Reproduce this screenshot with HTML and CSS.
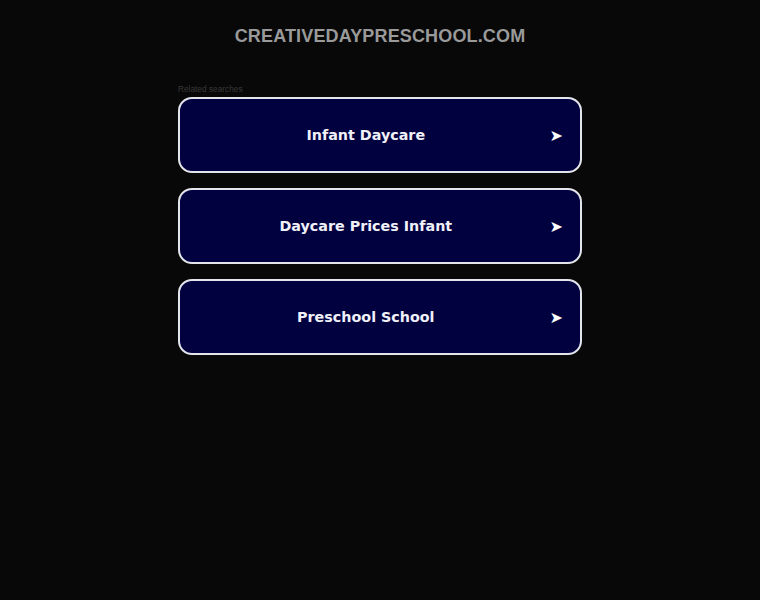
FILE: index.html
```html
<!DOCTYPE html>
<html>
  <head>
    <title>creativedaypreschool.com</title>
    <link rel="stylesheet" href="styles.css">
  </head>
  <body>
    <h1 class="domain">creativedaypreschool.com</h1>
    <div class="related">
      <p class="related-title">Related searches</p>
      <a class="search-link" href="#">
        <span class="label">Infant Daycare</span>
        <span class="arrow">&#10148;</span>
      </a>
      <a class="search-link" href="#">
        <span class="label">Daycare Prices Infant</span>
        <span class="arrow">&#10148;</span>
      </a>
      <a class="search-link" href="#">
        <span class="label">Preschool School</span>
        <span class="arrow">&#10148;</span>
      </a>
    </div>
  </body>
</html>
```

FILE: styles.css
```css
body {
  margin: 0;
  background-color: #080808;
  font-family: "Liberation Sans", Arial, sans-serif;
}

/* Domain name at the top */
.domain {
  margin: 0;
  padding-top: 25px;
  text-align: center;
  text-transform: uppercase;
  font-size: 18px;
  line-height: 22px;
  letter-spacing: 0.15px;
  color: #9a9a9a;
}

/* Related search block */
.related {
  width: 404px;
  margin: 37px auto 0;
  display: flex;
  flex-direction: column;
  gap: 15px;
}

.related-title {
  margin: 0 0 -12px;
  font-size: 8.3px;
  line-height: 10px;
  color: #383838;
}

.search-link {
  display: flex;
  align-items: center;
  height: 72px;
  padding: 0 17px 0 2px;
  border: 2px solid #e4e4ec;
  border-radius: 14px;
  background-color: #010140;
  color: #f0f0f8;
  text-decoration: none;
  font-family: "DejaVu Sans", Verdana, sans-serif;
  font-weight: bold;
  font-size: 14.3px;
}

.search-link .label {
  flex: 1;
  text-align: center;
}

.search-link .arrow {
  font-size: 16px;
  font-weight: normal;
  color: #ffffff;
}
```
